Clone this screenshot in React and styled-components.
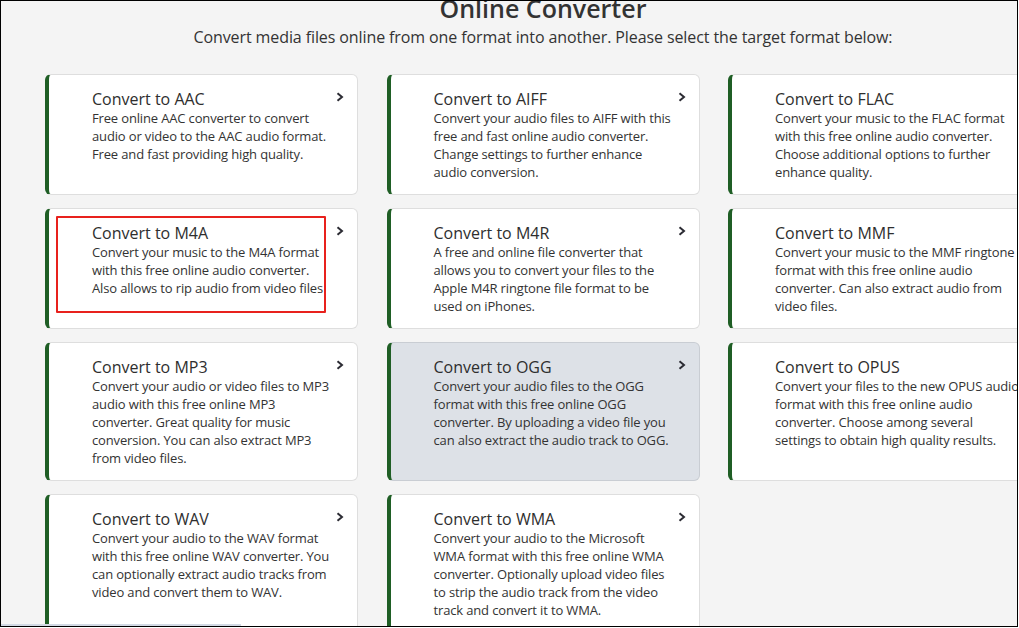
import React from "react";
import styled, { createGlobalStyle } from "styled-components";

const cards = [
  {
    title: "Convert to AAC",
    text: "Free online AAC converter to convert audio or video to the AAC audio format. Free and fast providing high quality.",
  },
  {
    title: "Convert to AIFF",
    text: "Convert your audio files to AIFF with this free and fast online audio converter. Change settings to further enhance audio conversion.",
  },
  {
    title: "Convert to FLAC",
    text: "Convert your music to the FLAC format with this free online audio converter. Choose additional options to further enhance quality.",
  },
  {
    title: "Convert to M4A",
    text: "Convert your music to the M4A format with this free online audio converter. Also allows to rip audio from video files",
    marked: true,
  },
  {
    title: "Convert to M4R",
    text: "A free and online file converter that allows you to convert your files to the Apple M4R ringtone file format to be used on iPhones.",
  },
  {
    title: "Convert to MMF",
    text: "Convert your music to the MMF ringtone format with this free online audio converter. Can also extract audio from video files.",
  },
  {
    title: "Convert to MP3",
    text: "Convert your audio or video files to MP3 audio with this free online MP3 converter. Great quality for music conversion. You can also extract MP3 from video files.",
  },
  {
    title: "Convert to OGG",
    text: "Convert your audio files to the OGG format with this free online OGG converter. By uploading a video file you can also extract the audio track to OGG.",
    hover: true,
  },
  {
    title: "Convert to OPUS",
    text: "Convert your files to the new OPUS audio format with this free online audio converter. Choose among several settings to obtain high quality results.",
  },
  {
    title: "Convert to WAV",
    text: "Convert your audio to the WAV format with this free online WAV converter. You can optionally extract audio tracks from video and convert them to WAV.",
  },
  {
    title: "Convert to WMA",
    text: "Convert your audio to the Microsoft WMA format with this free online WMA converter. Optionally upload video files to strip the audio track from the video track and convert it to WMA.",
  },
];

export default function App() {
  return (
    <>
      <GlobalStyle />
      <Frame>
        <Header>
          <Heading>Online Converter</Heading>
          <Subtitle>
            Convert media files online from one format into another. Please
            select the target format below:
          </Subtitle>
        </Header>

        <Grid>
          {cards.map((c) => (
            <Card key={c.title} $hover={c.hover}>
              <CardTitle>{c.title}</CardTitle>
              <CardText>{c.text}</CardText>
              <Chevron viewBox="0 0 8 10">
                <path d="M1.5 1.2 L6 5 L1.5 8.8" />
              </Chevron>
              {c.marked && <Marker />}
            </Card>
          ))}
        </Grid>

        <ScrollThumb />
      </Frame>
    </>
  );
}

// ---------------- Styled Components ----------------
const GlobalStyle = createGlobalStyle`
  html, body {
    margin: 0;
    padding: 0;
    background: #fff;
  }
  body {
    font-family: "Open Sans", "Liberation Sans", sans-serif;
    color: #333;
  }
`;

const Frame = styled.div`
  position: relative;
  width: 1018px;
  height: 627px;
  box-sizing: border-box;
  border: 1px solid #000;
  background: #f4f4f4;
  overflow: hidden;
`;

const Header = styled.div`
  display: flex;
  flex-direction: column;
  align-items: center;
  padding-left: 68px;
  margin-top: -9px;
`;

const Heading = styled.h1`
  margin: 0;
  font-size: 25px;
  line-height: 32px;
  font-weight: 600;
  color: #333;
`;

const Subtitle = styled.p`
  margin: 1px 0 0;
  font-size: 16px;
  line-height: 24px;
  letter-spacing: -0.1px;
  color: #333;
  white-space: nowrap;
`;

const Grid = styled.div`
  display: grid;
  grid-template-columns: repeat(3, 313px);
  column-gap: 28.5px;
  row-gap: 13px;
  padding-left: 44px;
  margin-top: 25px;
`;

const Card = styled.div`
  position: relative;
  padding: 14px 21px 13px 43px;
  background: ${(p) => (p.$hover ? "#dde1e7" : "#fff")};
  border: 1px solid ${(p) => (p.$hover ? "#c9cdd3" : "#dedede")};
  border-left: 4px solid #1f5e25;
  border-radius: 6px;
`;

const CardTitle = styled.div`
  font-size: 16px;
  line-height: 20px;
  font-weight: 500;
  color: #2e2e2e;
`;

const CardText = styled.div`
  font-size: 13px;
  line-height: 18px;
  letter-spacing: -0.15px;
  color: #333;
`;

const Chevron = styled.svg`
  position: absolute;
  top: 17px;
  right: 13px;
  width: 8px;
  height: 10px;
  fill: none;
  stroke: #2b2b33;
  stroke-width: 2;
`;

const Marker = styled.div`
  position: absolute;
  left: 7px;
  top: 7px;
  width: 270px;
  height: 97px;
  box-sizing: border-box;
  border: 2px solid #e8211d;
  border-radius: 1px;
`;

const ScrollThumb = styled.div`
  position: absolute;
  left: 0;
  bottom: 0;
  width: 240px;
  height: 2px;
  background: #d2d9e4;
`;
